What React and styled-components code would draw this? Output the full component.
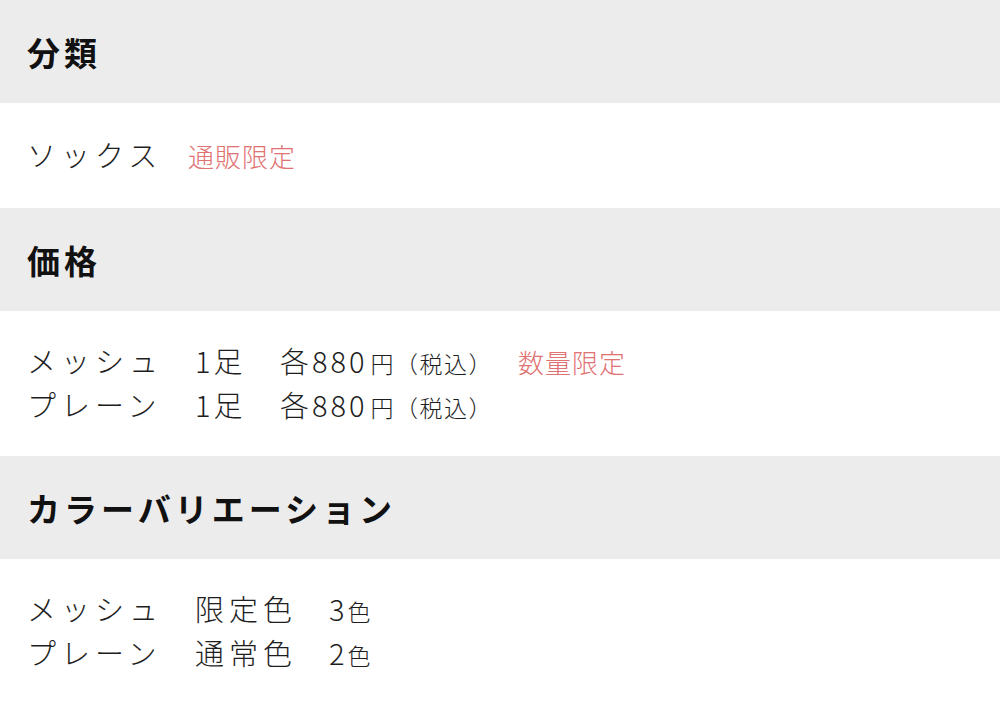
import React from "react";
import styled, { createGlobalStyle } from "styled-components";

const Global = createGlobalStyle`
  body {
    margin: 0;
    background: #fff;
    font-family: "Noto Sans CJK JP", "Noto Sans", sans-serif;
    color: #1e1e1e;
  }
`

const Page = styled.div`
  width: 1000px;
  height: 704px;
  overflow: hidden;
`

const Heading = styled.h2`
  margin: 0;
  height: 103px;
  box-sizing: border-box;
  padding: 0 27px;
  display: flex;
  align-items: center;
  background: #ececec;
  font-size: 33px;
  font-weight: 700;
  letter-spacing: 4px;
  color: #111;
`

const Body = styled.div`
  padding: 0 27px 3px;
  height: ${(p) => (p.tall ? "145px" : "105px")};
  box-sizing: border-box;
  display: flex;
  flex-direction: column;
  justify-content: center;
`

const Line = styled.div`
  display: flex;
  align-items: baseline;
  height: 44px;
  font-size: 29px;
  font-weight: 300;
  line-height: 44px;
  white-space: pre;
`

const Cell = styled.span`
  width: ${(p) => p.w}px;
  letter-spacing: ${(p) => p.ls || 0}px;
  flex: none;
`

const Num = styled.span`
  letter-spacing: 3px;
  margin-left: ${(p) => p.gap || 0}px;
`

const Small = styled.span`
  font-size: 23px;
  line-height: 1;
  letter-spacing: ${(p) => p.ls || 0}px;
  margin-left: ${(p) => p.gap || 0}px;
`

const Note = styled.span`
  color: #df7272;
  font-size: 26px;
  letter-spacing: 1px;
`

export default function App() {
  return (
    <Page>
      <Global />
      <Heading>分類</Heading>
      <Body>
        <Line>
          <Cell w={161} ls={5}>ソックス</Cell>
          <Note>通販限定</Note>
        </Line>
      </Body>
      <Heading>価格</Heading>
      <Body tall>
        <Line>
          <Cell w={168} ls={5}>メッシュ</Cell>
          <Cell w={85}><Num>1</Num>足</Cell>
          <Cell w={238}>各<Num gap={3}>880</Num><Small gap={3} ls={1.5}>円（税込）</Small></Cell>
          <Note>数量限定</Note>
        </Line>
        <Line>
          <Cell w={168} ls={5}>プレーン</Cell>
          <Cell w={85}><Num>1</Num>足</Cell>
          <Cell w={238}>各<Num gap={3}>880</Num><Small gap={3} ls={1.5}>円（税込）</Small></Cell>
        </Line>
      </Body>
      <Heading>カラーバリエーション</Heading>
      <Body tall>
        <Line>
          <Cell w={168} ls={5}>メッシュ</Cell>
          <Cell w={134} ls={5}>限定色</Cell>
          <Cell><Num>3</Num><Small>色</Small></Cell>
        </Line>
        <Line>
          <Cell w={168} ls={5}>プレーン</Cell>
          <Cell w={134} ls={5}>通常色</Cell>
          <Cell><Num>2</Num><Small>色</Small></Cell>
        </Line>
      </Body>
    </Page>
  );
}
